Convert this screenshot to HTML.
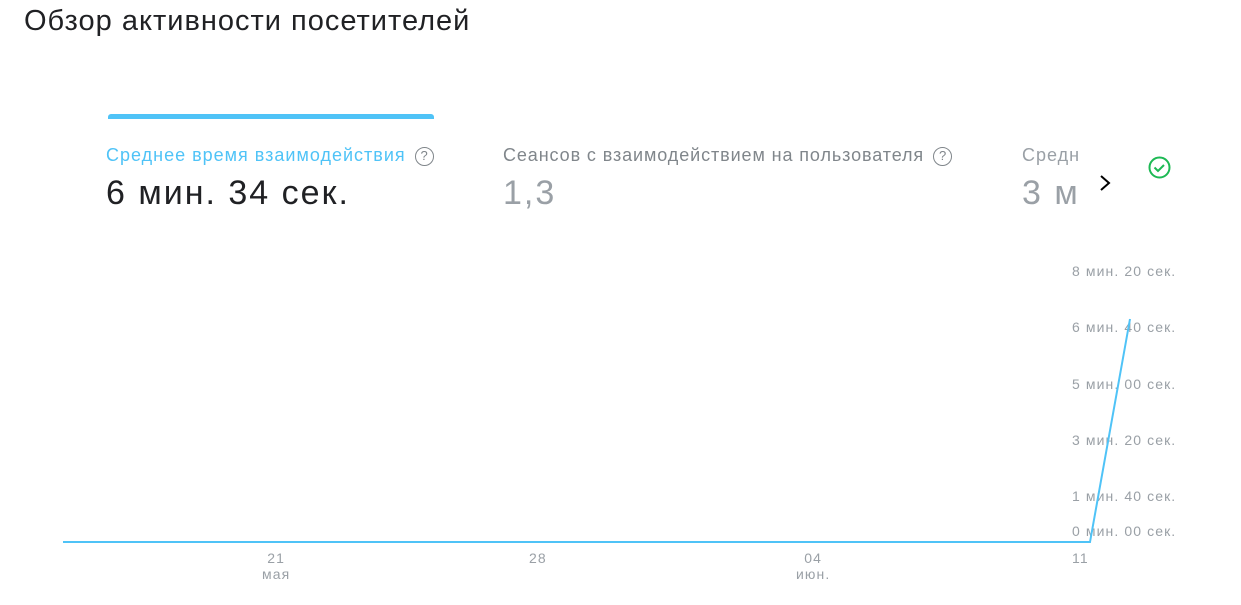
<!DOCTYPE html>
<html><head><meta charset="utf-8"><style>
body{margin:0;width:1241px;height:605px;background:#fff;font-family:"Liberation Sans",sans-serif;position:relative;overflow:hidden}
.a{position:absolute;white-space:nowrap}
.ax{font-size:14px;color:#9aa0a6;letter-spacing:1.1px}
.q{display:inline-block;width:19px;height:19px;border:1.5px solid #80868b;border-radius:50%;font-size:13px;text-align:center;color:#80868b;vertical-align:1px;margin-left:9px;box-sizing:border-box;line-height:16px;letter-spacing:0}
</style></head><body>
<div class="a" style="left:24px;top:5px;font-size:29px;letter-spacing:1px;color:#202124">Обзор активности посетителей</div>
<div class="a" style="left:108px;top:114px;width:326px;height:5px;background:#4fc3f7;border-radius:3px 3px 0 0"></div>
<div class="a" style="left:106px;top:145px;font-size:18px;letter-spacing:1px;color:#4fc3f7">Среднее время взаимодействия<span class="q">?</span></div>
<div class="a" style="left:106px;top:174px;font-size:34px;letter-spacing:2px;color:#202124">6 мин. 34 сек.</div>
<div class="a" style="left:503px;top:145px;font-size:18px;letter-spacing:0.9px;color:#80868b">Сеансов с взаимодействием на пользователя<span class="q">?</span></div>
<div class="a" style="left:503px;top:174px;font-size:34px;letter-spacing:2px;color:#9aa0a6">1,3</div>
<div class="a" style="left:1022px;top:145px;font-size:18px;letter-spacing:1px;color:#9aa0a6;width:57px;overflow:hidden">Средн</div>
<div class="a" style="left:1022px;top:174px;font-size:34px;letter-spacing:2px;color:#9aa0a6;width:56px;overflow:hidden">3 м</div>
<svg class="a" style="left:1096px;top:172px" width="20" height="22"><path d="M5 4l8 7-8 7" fill="none" stroke="#000" stroke-width="2"/></svg>
<svg class="a" style="left:1147px;top:155px" width="25" height="25"><circle cx="12.5" cy="12.5" r="10" fill="none" stroke="#1db954" stroke-width="2"/><path d="M7.5 12.5l3.5 3.5 6-6" fill="none" stroke="#1db954" stroke-width="2"/></svg>
<div class="a ax" style="left:1072px;top:263px">8 мин. 20 сек.</div>
<div class="a ax" style="left:1072px;top:319px">6 мин. 40 сек.</div>
<div class="a ax" style="left:1072px;top:376px">5 мин. 00 сек.</div>
<div class="a ax" style="left:1072px;top:432px">3 мин. 20 сек.</div>
<div class="a ax" style="left:1072px;top:488px">1 мин. 40 сек.</div>
<div class="a ax" style="left:1072px;top:523px">0 мин. 00 сек.</div>
<svg class="a" style="left:0;top:0" width="1241" height="605"><path d="M63 542H1090L1130 319" fill="none" stroke="#4fc3f7" stroke-width="2"/></svg>
<div class="a ax" style="left:262px;top:550px;text-align:center;line-height:16px">21<br>мая</div>
<div class="a ax" style="left:529px;top:550px;line-height:16px">28</div>
<div class="a ax" style="left:796px;top:550px;text-align:center;line-height:16px">04<br>июн.</div>
<div class="a ax" style="left:1072px;top:550px;line-height:16px">11</div>
</body></html>
